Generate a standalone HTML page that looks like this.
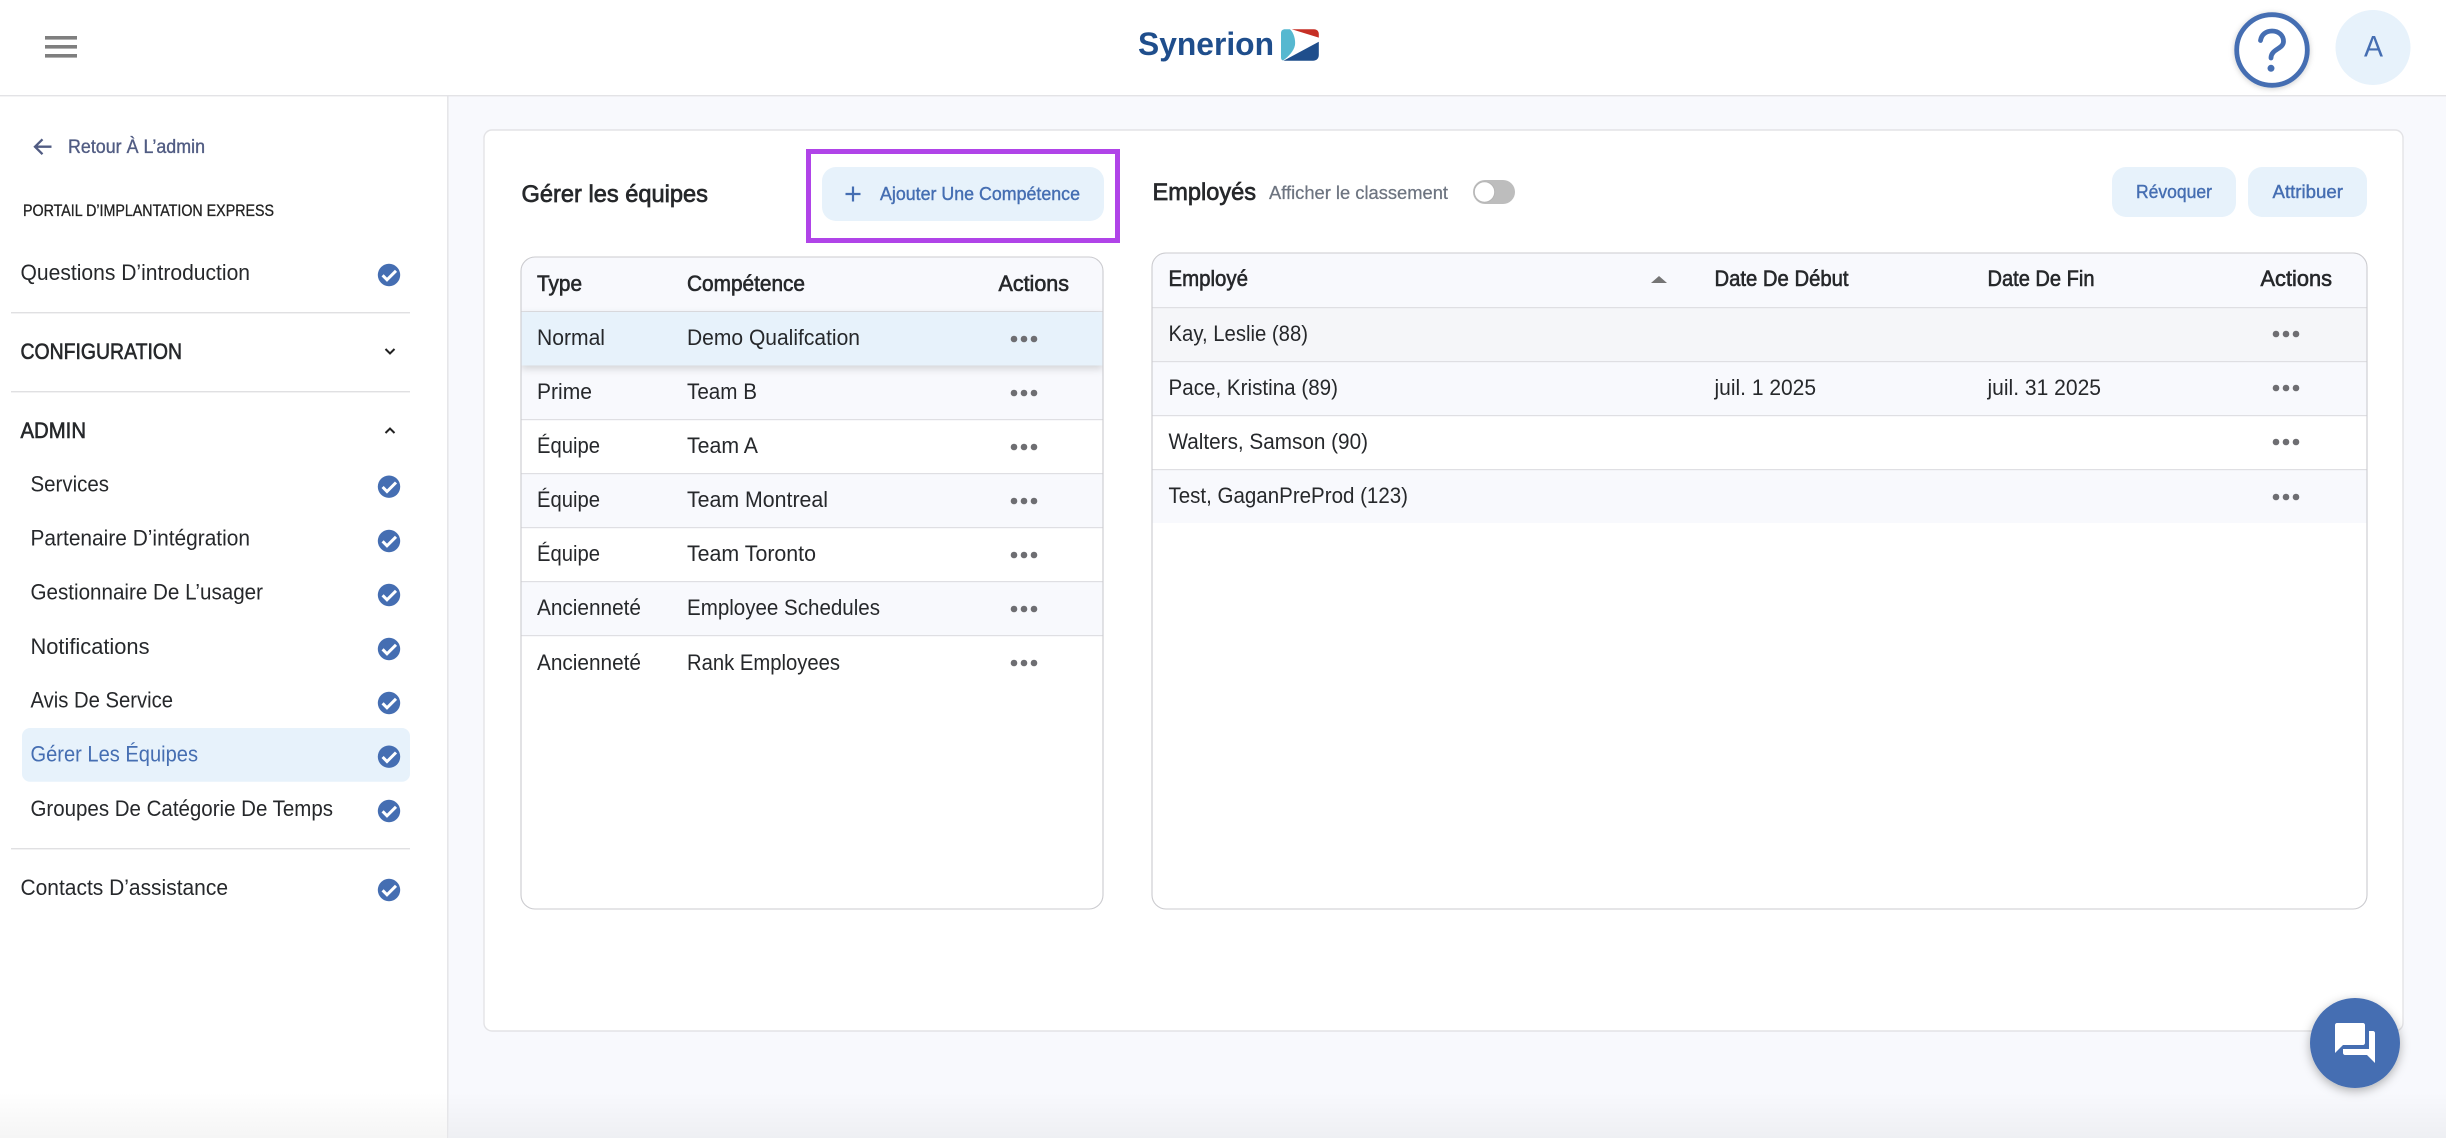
<!DOCTYPE html>
<html lang="fr">
<head>
<meta charset="utf-8">
<title>Gérer les équipes</title>
<style>
html,body{margin:0;padding:0;background:#f8f9fd;width:2446px;height:1138px;overflow:hidden}
svg{display:block}
text{font-family:"Liberation Sans",sans-serif;font-size:21.8px;fill:currentColor;color:#26282b}
.m{stroke:currentColor;stroke-width:.6px}
.b{color:#456eb2}
.h{font-size:24px;stroke-width:.7px}
.btn{font-size:18.7px;color:#456eb2;stroke:currentColor;stroke-width:.4px}
</style>
</head>
<body>
<svg xmlns="http://www.w3.org/2000/svg" width="2446" height="1138" viewBox="0 0 2446 1138">
<defs>
<clipPath id="c1"><rect x="521" y="257" width="582" height="652" rx="14"/></clipPath>
<clipPath id="c2"><rect x="1152" y="253" width="1215" height="656" rx="14"/></clipPath>
<filter id="rs" x="-5%" y="-30%" width="110%" height="170%"><feDropShadow dx="0" dy="3" stdDeviation="4" flood-color="#000" flood-opacity=".16"/></filter>
<filter id="fs" x="-30%" y="-30%" width="160%" height="160%"><feDropShadow dx="0" dy="3" stdDeviation="5" flood-color="#000" flood-opacity=".3"/></filter>
<filter id="hs" x="-30%" y="-30%" width="160%" height="160%"><feDropShadow dx="0" dy="1" stdDeviation="3" flood-color="#000" flood-opacity=".2"/></filter>
<linearGradient id="bot" x1="0" y1="0" x2="0" y2="1"><stop offset="0" stop-color="#000" stop-opacity="0"/><stop offset="1" stop-color="#000" stop-opacity=".04"/></linearGradient>
<g id="ck"><circle r="11.2" fill="#456eb2"/><path d="M-6.4 .3 L-2 4.8 L7 -4.2" fill="none" stroke="#fff" stroke-width="3"/></g>
<g id="dots" fill="#6e6e72"><circle cx="-10" r="3.3"/><circle r="3.3"/><circle cx="10" r="3.3"/></g>
</defs>

<!-- backgrounds -->
<rect width="2446" height="1138" fill="#f8f9fd"/>
<rect x="0" y="96" width="447" height="1042" fill="#fff"/>
<rect x="447" y="96" width="1.6" height="1042" fill="#e6e6e9"/>
<rect width="2446" height="95" fill="#fff"/>
<rect y="95" width="2446" height="1.4" fill="#e3e3e6"/>

<!-- header -->
<g fill="#7f7f7f"><rect x="45" y="36" width="32" height="3.6"/><rect x="45" y="45" width="32" height="3.6"/><rect x="45" y="54" width="32" height="3.6"/></g>
<text x="1138" y="55" textLength="136" lengthAdjust="spacingAndGlyphs" font-weight="700" style="font-size:32px;color:#1f4e8c">Synerion</text>
<path d="M1285 29.3 H1290 C1294 33 1295.6 40 1295 45 C1294 51 1288 57 1283 60.5 C1281.5 60 1281 59 1281 57 V33 C1281 30.5 1283 29.3 1285 29.3Z" fill="#56b8d0"/>
<path d="M1291.7 29.3 H1314 C1317 29.3 1318.8 31.5 1318.8 34 V37.6Z" fill="#c62f25"/>
<path d="M1283.5 60.7 L1318.8 41.7 V55 C1318.8 58.5 1316.5 60.7 1313 60.7Z" fill="#1f4e8c"/>
<circle cx="2272" cy="50" r="35.3" fill="#fff" stroke="#456eb2" stroke-width="4.8" filter="url(#hs)"/>
<path d="M2260.5 40.5 C2261.5 34.5 2266 31 2272 31 C2279 31 2283.5 35.5 2283.5 41.5 C2283.5 49 2271 49 2271 58" fill="none" stroke="#456eb2" stroke-width="4.8" stroke-linecap="round"/>
<circle cx="2271" cy="68.3" r="3.5" fill="#456eb2"/>
<circle cx="2373" cy="47.5" r="37.5" fill="#e7f2fb"/>
<text class="b" x="2364" y="56.7" textLength="19" lengthAdjust="spacingAndGlyphs" style="font-size:30px">A</text>

<!-- sidebar -->
<path d="M51.5 146.7 H35.5 M42.5 139.3 L35 146.7 L42.5 154.2" fill="none" stroke="#515c83" stroke-width="2.3"/>
<text class="m" x="68" y="153" textLength="137" lengthAdjust="spacingAndGlyphs" style="font-size:19.2px;color:#515c83;stroke-width:.35px">Retour À L’admin</text>
<text class="m" x="23" y="216" textLength="251" lengthAdjust="spacingAndGlyphs" style="font-size:16.2px;color:#222;stroke-width:.3px">PORTAIL D’IMPLANTATION EXPRESS</text>

<text x="20.5" y="280" textLength="229.5" lengthAdjust="spacingAndGlyphs">Questions D’introduction</text>
<use href="#ck" x="389" y="275"/>
<rect x="11" y="312" width="399" height="1.4" fill="#e0e0e2"/>
<text class="m" x="20.5" y="359" textLength="161.5" lengthAdjust="spacingAndGlyphs">CONFIGURATION</text>
<path d="M385.5 349 L390 353.5 L394.5 349" fill="none" stroke="#222" stroke-width="2"/>
<rect x="11" y="391" width="399" height="1.4" fill="#e0e0e2"/>
<text class="m" x="20.5" y="438" textLength="65.5" lengthAdjust="spacingAndGlyphs">ADMIN</text>
<path d="M385.5 433 L390 428.5 L394.5 433" fill="none" stroke="#222" stroke-width="2"/>

<text x="30.5" y="491.7" textLength="78.5" lengthAdjust="spacingAndGlyphs">Services</text>
<use href="#ck" x="389" y="486.7"/>
<text x="30.5" y="545.7" textLength="219.5" lengthAdjust="spacingAndGlyphs">Partenaire D’intégration</text>
<use href="#ck" x="389" y="541"/>
<text x="30.5" y="599.5" textLength="232.5" lengthAdjust="spacingAndGlyphs">Gestionnaire De L’usager</text>
<use href="#ck" x="389" y="595"/>
<text x="30.5" y="654" textLength="119" lengthAdjust="spacingAndGlyphs">Notifications</text>
<use href="#ck" x="389" y="649"/>
<text x="30.5" y="707.7" textLength="142.5" lengthAdjust="spacingAndGlyphs">Avis De Service</text>
<use href="#ck" x="389" y="703"/>
<rect x="22" y="728" width="388" height="53.7" rx="8" fill="#e7f2fb"/>
<text class="b" x="30.5" y="761.7" textLength="167.5" lengthAdjust="spacingAndGlyphs">Gérer Les Équipes</text>
<use href="#ck" x="389" y="756.7"/>
<text x="30.5" y="816" textLength="302.5" lengthAdjust="spacingAndGlyphs">Groupes De Catégorie De Temps</text>
<use href="#ck" x="389" y="811"/>
<rect x="11" y="848" width="399" height="1.4" fill="#e0e0e2"/>
<text x="20.5" y="895" textLength="207.5" lengthAdjust="spacingAndGlyphs">Contacts D’assistance</text>
<use href="#ck" x="389" y="890"/>

<!-- card -->
<rect x="484" y="130" width="1919" height="901" rx="8" fill="#fff" stroke="#e3e3e6" stroke-width="1.4"/>

<text class="m h" x="521.5" y="202" textLength="186.5" lengthAdjust="spacingAndGlyphs">Gérer les équipes</text>

<rect x="822" y="167" width="282" height="54" rx="14" fill="#e7f2fb"/>
<path d="M853 186.5 V201.5 M845.5 194 H860.5" stroke="#456eb2" stroke-width="2.2" fill="none"/>
<text class="btn" x="880" y="200" textLength="200" lengthAdjust="spacingAndGlyphs">Ajouter Une Compétence</text>
<rect x="808.5" y="151.5" width="309" height="89" fill="none" stroke="#b044e8" stroke-width="5"/>

<!-- left table -->
<g clip-path="url(#c1)">
<rect x="521" y="257" width="582" height="54.5" fill="#f8f9fd"/>
<rect x="521" y="365.5" width="582" height="54" fill="#f8f9fd"/>
<rect x="521" y="473.5" width="582" height="54" fill="#f8f9fd"/>
<rect x="521" y="581.5" width="582" height="54" fill="#f8f9fd"/>
<g fill="#dfdfe3">
<rect x="521" y="311" width="582" height="1.2"/>
<rect x="521" y="419" width="582" height="1.2"/>
<rect x="521" y="473" width="582" height="1.2"/>
<rect x="521" y="527" width="582" height="1.2"/>
<rect x="521" y="581" width="582" height="1.2"/>
<rect x="521" y="635" width="582" height="1.2"/>
</g>
<rect x="521" y="312" width="582" height="53.5" fill="#e7f2fb" filter="url(#rs)"/>
</g>
<rect x="521" y="257" width="582" height="652" rx="14" fill="none" stroke="#cbcbcf" stroke-width="1.1"/>

<text class="m" x="537" y="291" textLength="45" lengthAdjust="spacingAndGlyphs">Type</text>
<text class="m" x="687" y="291" textLength="118" lengthAdjust="spacingAndGlyphs">Compétence</text>
<text class="m" x="998.5" y="291" textLength="70.5" lengthAdjust="spacingAndGlyphs">Actions</text>

<text x="537" y="345" textLength="68" lengthAdjust="spacingAndGlyphs">Normal</text>
<text x="687" y="345" textLength="173" lengthAdjust="spacingAndGlyphs">Demo Qualifcation</text>
<use href="#dots" x="1024" y="339"/>
<text x="537" y="399" textLength="55" lengthAdjust="spacingAndGlyphs">Prime</text>
<text x="687" y="399" textLength="70" lengthAdjust="spacingAndGlyphs">Team B</text>
<use href="#dots" x="1024" y="393"/>
<text x="537" y="453" textLength="63" lengthAdjust="spacingAndGlyphs">Équipe</text>
<text x="687" y="453" textLength="71" lengthAdjust="spacingAndGlyphs">Team A</text>
<use href="#dots" x="1024" y="447"/>
<text x="537" y="507" textLength="63" lengthAdjust="spacingAndGlyphs">Équipe</text>
<text x="687" y="507" textLength="141" lengthAdjust="spacingAndGlyphs">Team Montreal</text>
<use href="#dots" x="1024" y="501"/>
<text x="537" y="561" textLength="63" lengthAdjust="spacingAndGlyphs">Équipe</text>
<text x="687" y="561" textLength="129" lengthAdjust="spacingAndGlyphs">Team Toronto</text>
<use href="#dots" x="1024" y="555"/>
<text x="537" y="615" textLength="104" lengthAdjust="spacingAndGlyphs">Ancienneté</text>
<text x="687" y="615" textLength="193" lengthAdjust="spacingAndGlyphs">Employee Schedules</text>
<use href="#dots" x="1024" y="609"/>
<text x="537" y="670" textLength="104" lengthAdjust="spacingAndGlyphs">Ancienneté</text>
<text x="687" y="670" textLength="153" lengthAdjust="spacingAndGlyphs">Rank Employees</text>
<use href="#dots" x="1024" y="663"/>

<!-- right header -->
<text class="m h" x="1152.5" y="200" textLength="103.5" lengthAdjust="spacingAndGlyphs">Employés</text>
<text x="1269" y="199" textLength="179" lengthAdjust="spacingAndGlyphs" style="font-size:18.7px;color:#6d7480;stroke:currentColor;stroke-width:.25px">Afficher le classement</text>
<rect x="1473" y="180" width="42" height="24" rx="12" fill="#bdbdbd"/>
<circle cx="1484.5" cy="192" r="10.2" fill="#fff" stroke="#b5b5b5" stroke-width="1"/>

<rect x="2112" y="167" width="124" height="50" rx="14" fill="#e7f2fb"/>
<text class="btn" x="2136" y="198" textLength="76" lengthAdjust="spacingAndGlyphs">Révoquer</text>
<rect x="2248" y="167" width="119" height="50" rx="14" fill="#e7f2fb"/>
<text class="btn" x="2272.5" y="198" textLength="70.5" lengthAdjust="spacingAndGlyphs">Attribuer</text>

<!-- right table -->
<g clip-path="url(#c2)">
<rect x="1152" y="253" width="1215" height="54" fill="#f8f9fd"/>
<rect x="1152" y="307" width="1215" height="54" fill="#f5f6f9"/>
<rect x="1152" y="361" width="1215" height="54" fill="#f8f9fd"/>
<rect x="1152" y="469" width="1215" height="54" fill="#f8f9fd"/>
<g fill="#dfdfe3">
<rect x="1152" y="307" width="1215" height="1.2"/>
<rect x="1152" y="361" width="1215" height="1.2"/>
<rect x="1152" y="415" width="1215" height="1.2"/>
<rect x="1152" y="469" width="1215" height="1.2"/>
</g>
</g>
<rect x="1152" y="253" width="1215" height="656" rx="14" fill="none" stroke="#cbcbcf" stroke-width="1.1"/>

<text class="m" x="1168.5" y="286" textLength="79.5" lengthAdjust="spacingAndGlyphs">Employé</text>
<path d="M1651 283 L1659 276 L1667 283Z" fill="#757575"/>
<text class="m" x="1714.5" y="286" textLength="134" lengthAdjust="spacingAndGlyphs">Date De Début</text>
<text class="m" x="1987.5" y="286" textLength="107" lengthAdjust="spacingAndGlyphs">Date De Fin</text>
<text class="m" x="2260.5" y="286" textLength="71.5" lengthAdjust="spacingAndGlyphs">Actions</text>

<text x="1168.5" y="341" textLength="139.5" lengthAdjust="spacingAndGlyphs">Kay, Leslie (88)</text>
<use href="#dots" x="2286" y="334"/>
<text x="1168.5" y="395" textLength="169.5" lengthAdjust="spacingAndGlyphs">Pace, Kristina (89)</text>
<text x="1714.5" y="395" textLength="101.5" lengthAdjust="spacingAndGlyphs">juil. 1 2025</text>
<text x="1987.5" y="395" textLength="113.5" lengthAdjust="spacingAndGlyphs">juil. 31 2025</text>
<use href="#dots" x="2286" y="388"/>
<text x="1168.5" y="449" textLength="199.5" lengthAdjust="spacingAndGlyphs">Walters, Samson (90)</text>
<use href="#dots" x="2286" y="442"/>
<text x="1168.5" y="503" textLength="239.5" lengthAdjust="spacingAndGlyphs">Test, GaganPreProd (123)</text>
<use href="#dots" x="2286" y="497"/>

<!-- bottom fade -->
<rect x="0" y="1092" width="447" height="46" fill="url(#bot)"/>
<rect x="449" y="1092" width="1997" height="46" fill="url(#bot)"/>

<!-- chat fab -->
<circle cx="2355" cy="1043" r="45" fill="#456eb2" filter="url(#fs)"/>
<g transform="translate(2331 1019) scale(2)"><path fill="#fff" d="M21 6h-2v9H6v2c0 .55.45 1 1 1h11l4 4V7c0-.55-.45-1-1-1zm-4 6V3c0-.55-.45-1-1-1H3c-.55 0-1 .45-1 1v14l4-4h10c.55 0 1-.45 1-1z"/></g>
</svg>
</body>
</html>
